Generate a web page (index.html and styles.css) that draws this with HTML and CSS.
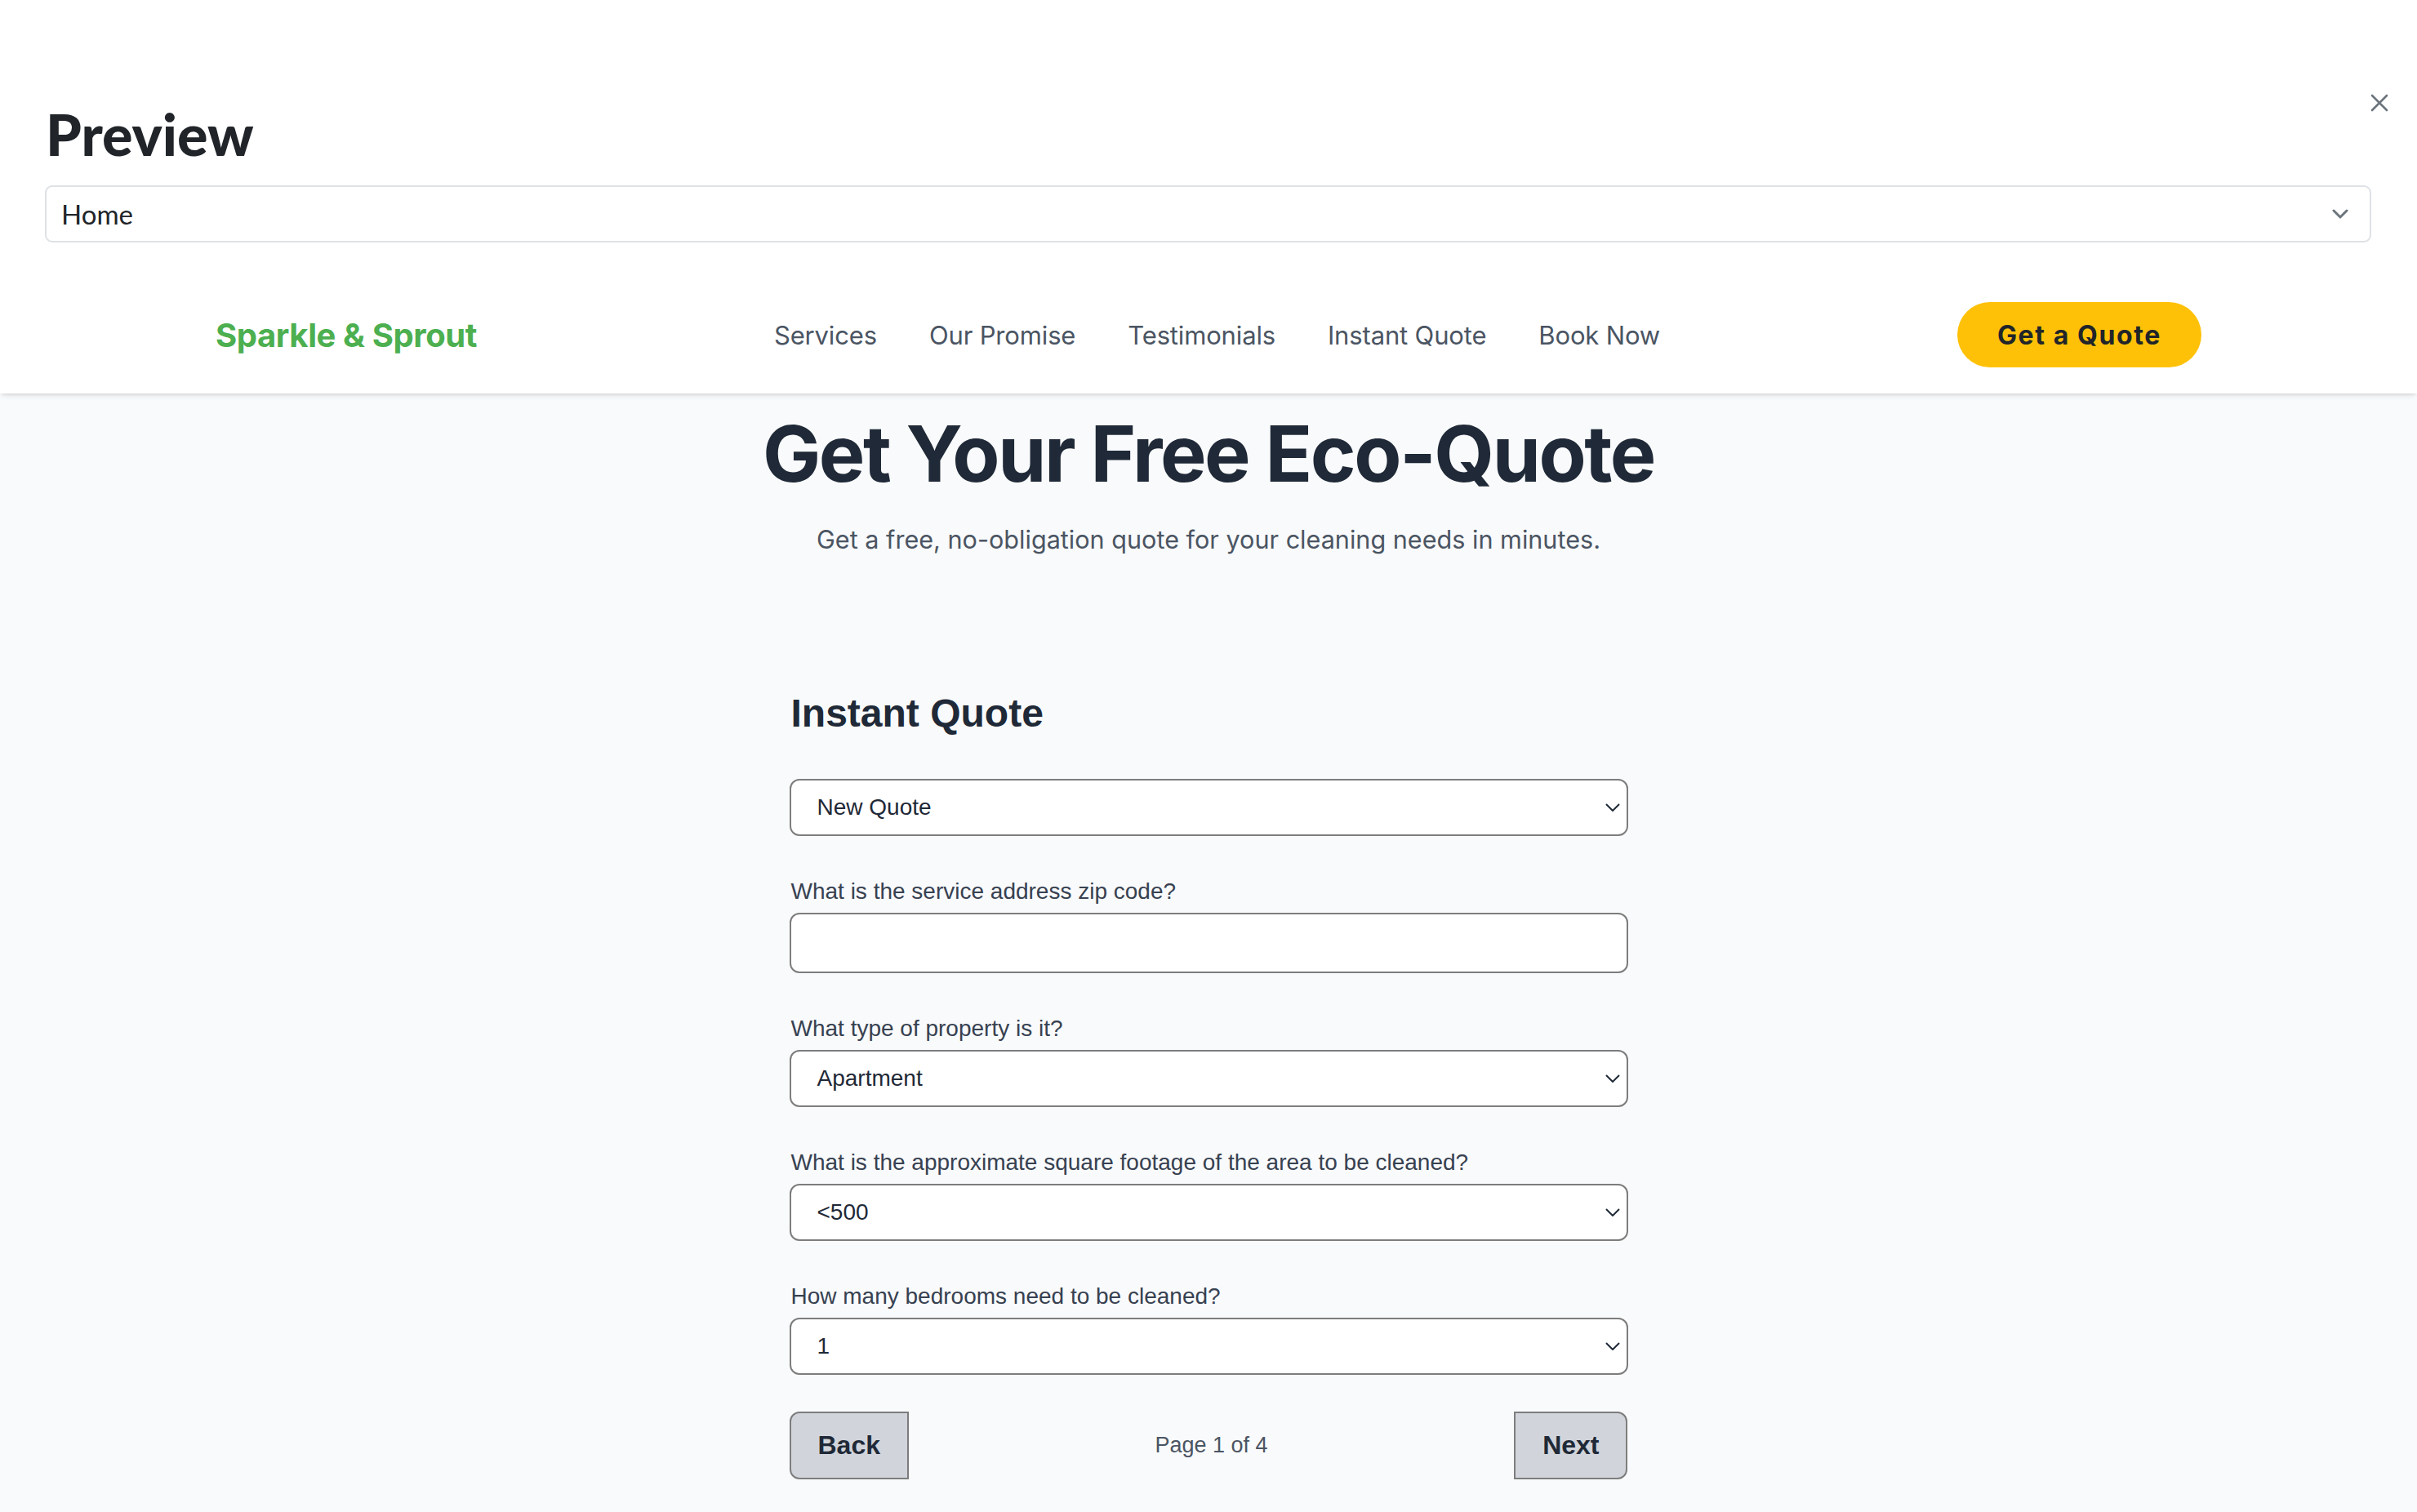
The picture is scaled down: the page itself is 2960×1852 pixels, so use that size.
FILE: index.html
```html
<!DOCTYPE html>
<html lang="en">
<head>
    <meta charset="UTF-8">
    <meta name="viewport" content="width=device-width, initial-scale=1.0">
    <title>Preview - Sparkle &amp; Sprout</title>
    <link rel="stylesheet" href="styles.css">
</head>
<body>
    <div class="preview">
        <!-- preview header -->
        <div class="preview-head">
            <h1>Preview</h1>
            <button class="close-btn" aria-label="Close">
                <svg width="22" height="22" viewBox="0 0 22 22"><path d="M2 2 L20 20 M20 2 L2 20" stroke="#6c757d" stroke-width="2.6" stroke-linecap="round" fill="none"/></svg>
            </button>
        </div>
        <div class="page-picker">
            <span>Home</span>
            <svg width="20" height="12" viewBox="0 0 20 12"><path d="M2 2 L10 10 L18 2" stroke="#6c757d" stroke-width="3" fill="none" stroke-linecap="round" stroke-linejoin="round"/></svg>
        </div>

        <!-- site being previewed -->
        <div class="site">
            <nav class="site-nav">
                <div class="nav-inner">
                    <a href="#" class="logo">Sparkle &amp; Sprout</a>
                    <div class="nav-links">
                        <a href="#">Services</a>
                        <a href="#">Our Promise</a>
                        <a href="#">Testimonials</a>
                        <a href="#">Instant Quote</a>
                        <a href="#">Book Now</a>
                    </div>
                    <a href="#" class="quote-btn">Get a Quote</a>
                </div>
            </nav>

            <main class="quote-page">
                <h2>Get Your Free Eco-Quote</h2>
                <p class="lead">Get a free, no-obligation quote for your cleaning needs in minutes.</p>

                <form class="quote-form">
                    <h3>Instant Quote</h3>

                    <div class="field">
                        <div class="select-box">
                            <span>New Quote</span>
                            <svg class="chev" width="18" height="10" viewBox="0 0 18 10"><path d="M1 1 L9 9 L17 1" stroke="#1f2937" stroke-width="2" fill="none"/></svg>
                        </div>
                    </div>

                    <div class="field">
                        <label>What is the service address zip code?</label>
                        <div class="text-box"></div>
                    </div>

                    <div class="field">
                        <label>What type of property is it?</label>
                        <div class="select-box">
                            <span>Apartment</span>
                            <svg class="chev" width="18" height="10" viewBox="0 0 18 10"><path d="M1 1 L9 9 L17 1" stroke="#1f2937" stroke-width="2" fill="none"/></svg>
                        </div>
                    </div>

                    <div class="field">
                        <label>What is the approximate square footage of the area to be cleaned?</label>
                        <div class="select-box">
                            <span>&lt;500</span>
                            <svg class="chev" width="18" height="10" viewBox="0 0 18 10"><path d="M1 1 L9 9 L17 1" stroke="#1f2937" stroke-width="2" fill="none"/></svg>
                        </div>
                    </div>

                    <div class="field">
                        <label>How many bedrooms need to be cleaned?</label>
                        <div class="select-box">
                            <span>1</span>
                            <svg class="chev" width="18" height="10" viewBox="0 0 18 10"><path d="M1 1 L9 9 L17 1" stroke="#1f2937" stroke-width="2" fill="none"/></svg>
                        </div>
                    </div>

                    <div class="pager">
                        <button type="button" class="pager-btn back">Back</button>
                        <span class="page-count">Page 1 of 4</span>
                        <button type="button" class="pager-btn next">Next</button>
                    </div>
                </form>
            </main>
        </div>
    </div>
</body>
</html>
```

FILE: styles.css
```css
body {
    margin: 0;
    background: #ffffff;
    font-family: 'Inter', 'Liberation Sans', sans-serif;
    color: #212529;
}
.preview {
    min-height: 1852px;
    background: #ffffff;
    display: flex;
    flex-direction: column;
}
.preview-head {
    display: flex;
    justify-content: space-between;
    align-items: flex-start;
    padding: 0 35px 0 56px;
}
.preview-head h1 {
    font-family: 'Lato', sans-serif;
    font-weight: 900;
    font-size: 70px;
    line-height: 80px;
    margin: 124px 0 23px;
    color: #212529;
}
.close-btn {
    background: none;
    border: none;
    padding: 0;
    margin-top: 115px;
    width: 22px;
    height: 22px;
    cursor: pointer;
}
.page-picker {
    margin: 0 56px 0 55px;
    height: 66px;
    border: 2px solid #dee2e6;
    border-radius: 9px;
    display: flex;
    align-items: center;
    justify-content: space-between;
    padding: 0 26px 0 18px;
    font-family: 'Lato', sans-serif;
    font-size: 33px;
    color: #212529;
}
.site {
    margin-top: 41px;
    flex: 1;
    display: flex;
    flex-direction: column;
    background: #f9fafb;
}
.site-nav {
    background: #ffffff;
    padding: 32px 0;
    box-shadow: 0 5px 7px -3px rgba(0, 0, 0, 0.12), 0 2px 3px -1px rgba(0, 0, 0, 0.08);
    position: relative;
}
.nav-inner {
    width: 2432px;
    margin: 0 auto;
    display: flex;
    justify-content: space-between;
    align-items: center;
    height: 80px;
}
.logo {
    color: #4caf50;
    font-weight: 700;
    font-size: 40px;
    text-decoration: none;
    letter-spacing: -0.01em;
}
.nav-links {
    display: flex;
    gap: 64px;
}
.nav-links a {
    color: #4b5563;
    font-size: 31px;
    letter-spacing: -0.005em;
    text-decoration: none;
}
.quote-btn {
    background: #ffc107;
    color: #212529;
    font-weight: 700;
    font-size: 32px;
    letter-spacing: 0.05em;
    text-decoration: none;
    height: 80px;
    padding: 0 49px;
    border-radius: 40px;
    display: flex;
    align-items: center;
}
.quote-page {
    padding-top: 26px;
    display: flex;
    flex-direction: column;
    align-items: center;
}
.quote-page h2 {
    margin: 0;
    font-size: 95px;
    line-height: 1;
    font-weight: 700;
    letter-spacing: -0.025em;
    color: #1f2937;
}
.lead {
    margin: 35px 0 0;
    font-size: 30.6px;
    line-height: 45px;
    color: #4b5563;
}
.quote-form {
    width: 1027px;
    margin-top: 163px;
    font-family: 'Liberation Sans', Arial, sans-serif;
}
.quote-form h3 {
    margin: 0 0 53px 2px;
    font-size: 48px;
    line-height: 55px;
    font-weight: 700;
    color: #1f2937;
}
.field {
    display: flex;
    flex-direction: column;
    margin-bottom: 52px;
}
.field label {
    font-size: 28px;
    line-height: 31px;
    color: #374151;
    margin: 0 0 11px 2px;
}
.select-box {
    height: 66px;
    background: #ffffff;
    border: 2px solid #7d7d7d;
    border-radius: 12px;
    display: flex;
    align-items: center;
    justify-content: space-between;
    padding: 0 8px 0 32px;
    font-size: 28px;
    color: #1f2937;
}
.text-box {
    height: 70px;
    background: #ffffff;
    border: 2px solid #7d7d7d;
    border-radius: 12px;
}
.pager {
    display: flex;
    justify-content: space-between;
    align-items: center;
    margin-top: -7px;
}
.pager-btn {
    height: 83px;
    padding: 0 33px;
    background: #d1d5db;
    border: 2px solid #7d7d7d;
    font-family: 'Liberation Sans', Arial, sans-serif;
    font-weight: 700;
    font-size: 32px;
    color: #1f2937;
}
.back {
    border-radius: 12px 0 0 12px;
}
.next {
    border-radius: 0 12px 12px 0;
}
.page-count {
    font-size: 27px;
    color: #4b5563;
}
```
